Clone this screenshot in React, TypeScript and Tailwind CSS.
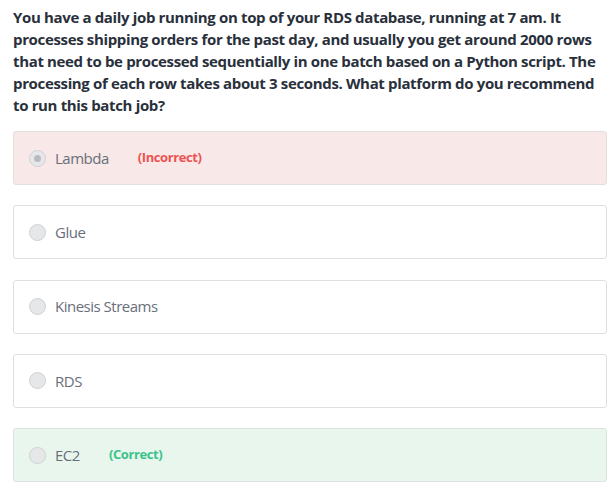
import React from 'react';

type Option = {
  label: string;
  status?: 'incorrect' | 'correct';
  checked?: boolean;
};

const options: Option[] = [
  { label: 'Lambda', status: 'incorrect', checked: true },
  { label: 'Glue' },
  { label: 'Kinesis Streams' },
  { label: 'RDS' },
  { label: 'EC2', status: 'correct' },
];

const Radio: React.FC<{ checked?: boolean }> = ({ checked }) => (
  <span className="flex h-[17px] w-[17px] shrink-0 items-center justify-center rounded-full border border-[#cfd1d4] bg-[#e6e7e9]">
    {checked && <span className="h-[7px] w-[7px] rounded-full bg-[#b9bbbe]" />}
  </span>
);

export default function App() {
  return (
    <div className="min-h-screen bg-white px-[13px] pt-[6px] font-['Open_Sans',sans-serif]">
      <p className="text-[15px] font-bold leading-[22px] tracking-[-0.35px] text-[#29303b]">
        You have a daily job running on top of your RDS database, running at 7 am. It processes shipping
        orders for the past day, and usually you get around 2000 rows that need to be processed
        sequentially in one batch based on a Python script. The processing of each row takes about 3
        seconds. What platform do you recommend to run this batch job?
      </p>

      <div className="mt-[15px] flex w-[594px] flex-col gap-[20.25px]">
        {options.map((o) => (
          <div
            key={o.label}
            className={
              'flex h-[54px] items-center rounded-[3px] border pl-[15px] ' +
              (o.status === 'incorrect'
                ? 'border-[#e5dede] bg-[#f8e8e8]'
                : o.status === 'correct'
                  ? 'border-[#dbe3de] bg-[#e8f6ee]'
                  : 'border-[#dedfe0] bg-white')
            }
          >
            <Radio checked={o.checked} />
            <span className="ml-[9px] text-[15px] tracking-[-0.5px] text-[#686f7a]">{o.label}</span>
            {o.status === 'incorrect' && (
              <span className="ml-[29px] text-[13px] font-bold tracking-[-0.4px] text-[#ec5252]">(Incorrect)</span>
            )}
            {o.status === 'correct' && (
              <span className="ml-[29px] text-[13px] font-bold tracking-[-0.4px] text-[#3cc28b]">(Correct)</span>
            )}
          </div>
        ))}
      </div>
    </div>
  );
}
